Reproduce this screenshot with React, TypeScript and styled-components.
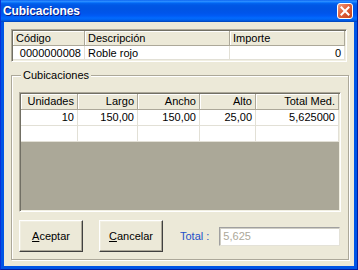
import styled, { createGlobalStyle } from "styled-components";

const GlobalStyle = createGlobalStyle`
  html, body {
    margin: 0;
    padding: 0;
    background: #ece9d8;
  }
  body {
    font-family: "Liberation Sans", Arial, sans-serif;
    font-size: 11px;
    color: #000;
  }
  * {
    box-sizing: border-box;
  }
`;

const Window = styled.div`
  width: 358px;
  height: 270px;
  display: flex;
  flex-direction: column;
  background: #0055e5;
  border-left: 1px solid #0831d9;
  border-right: 1px solid #001ea0;
  border-bottom: 1px solid #001ea0;
`;

const TitleBar = styled.div`
  height: 22px;
  flex-shrink: 0;
  display: flex;
  align-items: center;
  justify-content: space-between;
  padding: 0 4px 0 2px;
  background: linear-gradient(
    to bottom,
    #0058ee 0%,
    #3593ff 5%,
    #127dff 10%,
    #0262ee 16%,
    #0057e5 24%,
    #0054e3 40%,
    #0055eb 60%,
    #005bf5 72%,
    #026afe 82%,
    #0062ef 90%,
    #0052d6 96%,
    #0040ab 100%
  );
`;

const Title = styled.span`
  color: #fff;
  font-weight: bold;
  font-size: 12px;
  letter-spacing: -0.1px;
  text-shadow: 1px 1px 0 #0a1883;
`;

const Client = styled.div`
  flex: 1;
  margin: 0 3px 3px 3px;
  background: #ece9d8;
  display: flex;
  flex-direction: column;
  padding: 7px 5px 6px 7px;
`;

const Sunken = styled.div`
  border: 1px solid;
  border-color: #aca899 #fff #fff #aca899;
  box-shadow: inset 1px 1px 0 #716f64, inset -1px -1px 0 #f1efe2;
  padding: 1px;
  background: #fff;
`;

const TopGrid = styled(Sunken)`
  height: 33px;
  margin-right: 2px;
  flex-shrink: 0;
`;

const Row = styled.div<{ $cols: string; $h: number }>`
  display: grid;
  grid-template-columns: ${(p) => p.$cols};
  height: ${(p) => p.$h}px;
`;

const HeadCell = styled.div<{ $right?: boolean }>`
  background: #ece9d8;
  border-right: 1px solid #aca899;
  border-bottom: 1px solid #aca899;
  box-shadow: inset 1px 1px 0 #fff;
  padding: 0 3px;
  line-height: 14px;
  white-space: nowrap;
  overflow: hidden;
  text-align: ${(p) => (p.$right ? "right" : "left")};
`;

const Cell = styled.div<{ $right?: boolean }>`
  background: #fff;
  border-right: 1px solid #e2e0d6;
  border-bottom: 1px solid #e2e0d6;
  padding: 0 3px;
  line-height: 15px;
  white-space: nowrap;
  overflow: hidden;
  text-align: ${(p) => (p.$right ? "right" : "left")};
`;

const Group = styled.fieldset`
  flex: 1;
  margin: 7px 0 0 0;
  padding: 10px 7px 6px 7px;
  border: 1px solid #aca899;
  box-shadow: inset 1px 1px 0 #fff, 1px 1px 0 #fff;
  display: flex;
  flex-direction: column;
  min-width: 0;
`;

const Legend = styled.legend`
  padding: 0 2px;
  margin-left: 2px;
  line-height: 13px;
  background: #ece9d8;
`;

const DetailGrid = styled(Sunken)`
  height: 120px;
  display: flex;
  flex-direction: column;
`;

const Workspace = styled.div`
  flex: 1;
  background: #aba898;
`;

const ButtonBar = styled.div`
  display: flex;
  align-items: center;
  margin-top: 8px;
`;

const Button = styled.button`
  width: 64px;
  height: 32px;
  margin-right: 16px;
  font-family: inherit;
  font-size: 11px;
  color: #000;
  background: #ece9d8;
  border: 1px solid;
  border-color: #fff #404040 #404040 #fff;
  box-shadow: inset -1px -1px 0 #aca899, inset 1px 1px 0 #f1efe2;
  padding: 0;
`;

const TotalLabel = styled.span`
  color: #2350c8;
  margin: 0 10px 0 1px;
`;

const TotalField = styled.div`
  flex: 1;
  height: 19px;
  margin-right: 1px;
  background: #fff;
  border: 1px solid;
  border-color: #a0a0a0 #e4e2d8 #e4e2d8 #a0a0a0;
  box-shadow: inset 1px 1px 0 #d0cec4;
  color: #aca899;
  padding: 0 3px;
  line-height: 17px;
`;

const CloseIcon = () => (
  <svg width="16" height="16" viewBox="0 0 16 16">
    <defs>
      <linearGradient id="cg" x1="0" y1="0" x2="1" y2="1">
        <stop offset="0" stopColor="#f0a186" />
        <stop offset="0.45" stopColor="#e0613b" />
        <stop offset="1" stopColor="#c2401b" />
      </linearGradient>
    </defs>
    <rect x="0.5" y="0.5" width="15" height="15" rx="2.5" fill="url(#cg)" stroke="#fff" />
    <path d="M4.5 4.5 L11.5 11.5 M11.5 4.5 L4.5 11.5" stroke="#fff" strokeWidth="2" strokeLinecap="square" />
  </svg>
);

const topCols = "72px 145px 1fr";
const detCols = "57px 60px 62px 56px 1fr";

const App = () => {
  const detail = ["Unidades", "Largo", "Ancho", "Alto", "Total Med."];
  const values = ["10", "150,00", "150,00", "25,00", "5,625000"];

  return (
    <>
      <GlobalStyle />
      <Window>
        <TitleBar>
          <Title>Cubicaciones</Title>
          <CloseIcon />
        </TitleBar>
        <Client>
          <TopGrid>
            <Row $cols={topCols} $h={15}>
              <HeadCell>Código</HeadCell>
              <HeadCell>Descripción</HeadCell>
              <HeadCell>Importe</HeadCell>
            </Row>
            <Row $cols={topCols} $h={14}>
              <Cell $right>0000000008</Cell>
              <Cell>Roble rojo</Cell>
              <Cell $right>0</Cell>
            </Row>
          </TopGrid>

          <Group>
            <Legend>Cubicaciones</Legend>
            <DetailGrid>
              <Row $cols={detCols} $h={16}>
                {detail.map((d) => (
                  <HeadCell key={d} $right>
                    {d}
                  </HeadCell>
                ))}
              </Row>
              <Row $cols={detCols} $h={16}>
                {values.map((v, i) => (
                  <Cell key={i} $right>
                    {v}
                  </Cell>
                ))}
              </Row>
              <Row $cols={detCols} $h={16}>
                {values.map((_, i) => (
                  <Cell key={i} />
                ))}
              </Row>
              <Workspace />
            </DetailGrid>

            <ButtonBar>
              <Button>
                <u>A</u>ceptar
              </Button>
              <Button>
                <u>C</u>ancelar
              </Button>
              <TotalLabel>Total :</TotalLabel>
              <TotalField>5,625</TotalField>
            </ButtonBar>
          </Group>
        </Client>
      </Window>
    </>
  );
};

export default App;
